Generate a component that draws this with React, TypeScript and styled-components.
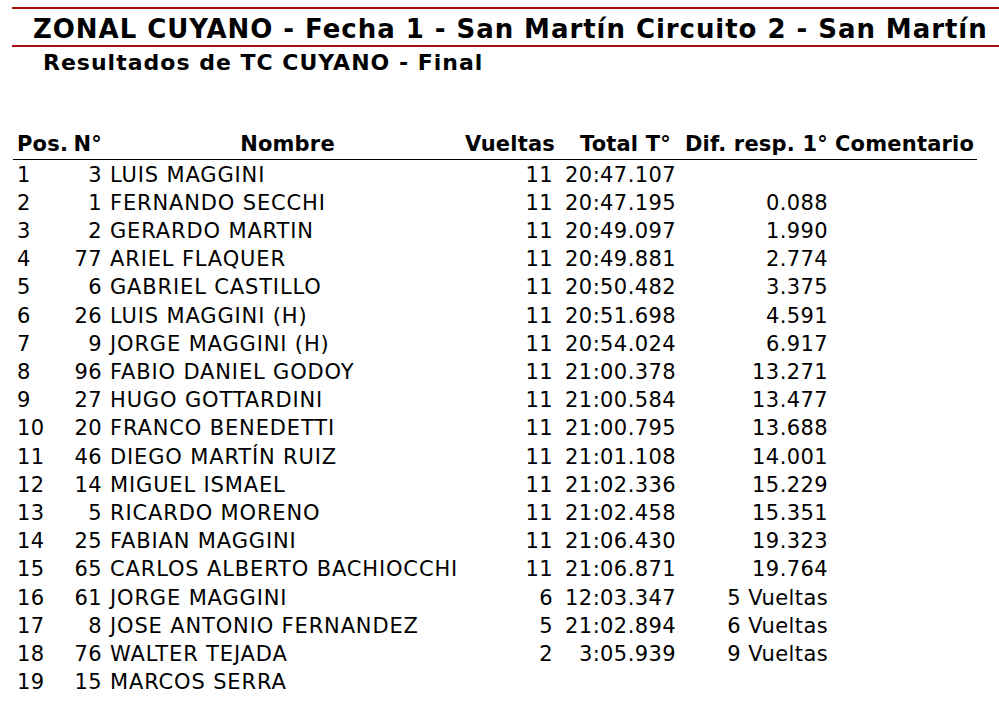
import styled, { createGlobalStyle } from 'styled-components'

const GlobalStyle = createGlobalStyle`
  body {
    margin: 0;
    background: #fff;
    color: #000;
    font-family: 'DejaVu Sans', Verdana, sans-serif;
  }
`

type Row = {
  pos: number
  num: number
  name: string
  laps: number | ''
  total: string
  diff: string
  comment?: string
}

const rows: Row[] = [
  { pos: 1, num: 3, name: 'LUIS MAGGINI', laps: 11, total: '20:47.107', diff: '' },
  { pos: 2, num: 1, name: 'FERNANDO SECCHI', laps: 11, total: '20:47.195', diff: '0.088' },
  { pos: 3, num: 2, name: 'GERARDO MARTIN', laps: 11, total: '20:49.097', diff: '1.990' },
  { pos: 4, num: 77, name: 'ARIEL FLAQUER', laps: 11, total: '20:49.881', diff: '2.774' },
  { pos: 5, num: 6, name: 'GABRIEL CASTILLO', laps: 11, total: '20:50.482', diff: '3.375' },
  { pos: 6, num: 26, name: 'LUIS MAGGINI (H)', laps: 11, total: '20:51.698', diff: '4.591' },
  { pos: 7, num: 9, name: 'JORGE MAGGINI (H)', laps: 11, total: '20:54.024', diff: '6.917' },
  { pos: 8, num: 96, name: 'FABIO DANIEL GODOY', laps: 11, total: '21:00.378', diff: '13.271' },
  { pos: 9, num: 27, name: 'HUGO GOTTARDINI', laps: 11, total: '21:00.584', diff: '13.477' },
  { pos: 10, num: 20, name: 'FRANCO BENEDETTI', laps: 11, total: '21:00.795', diff: '13.688' },
  { pos: 11, num: 46, name: 'DIEGO MARTÍN RUIZ', laps: 11, total: '21:01.108', diff: '14.001' },
  { pos: 12, num: 14, name: 'MIGUEL ISMAEL', laps: 11, total: '21:02.336', diff: '15.229' },
  { pos: 13, num: 5, name: 'RICARDO MORENO', laps: 11, total: '21:02.458', diff: '15.351' },
  { pos: 14, num: 25, name: 'FABIAN MAGGINI', laps: 11, total: '21:06.430', diff: '19.323' },
  { pos: 15, num: 65, name: 'CARLOS ALBERTO BACHIOCCHI', laps: 11, total: '21:06.871', diff: '19.764' },
  { pos: 16, num: 61, name: 'JORGE MAGGINI', laps: 6, total: '12:03.347', diff: '5 Vueltas' },
  { pos: 17, num: 8, name: 'JOSE ANTONIO FERNANDEZ', laps: 5, total: '21:02.894', diff: '6 Vueltas' },
  { pos: 18, num: 76, name: 'WALTER TEJADA', laps: 2, total: '3:05.939', diff: '9 Vueltas' },
  { pos: 19, num: 15, name: 'MARCOS SERRA', laps: '', total: '', diff: '' },
]

type Col = {
  label: string
  width: number
  align: 'left' | 'right'
  pl: number
  pr: number
  headAlign?: 'left' | 'right' | 'center'
  headPr?: number
  spacing?: number
}

// column boxes measured off the page, x from 13 to 977
const cols: Col[] = [
  { label: 'Pos.', width: 57, align: 'left', pl: 4, pr: 0 },
  { label: 'N°', width: 34, align: 'right', pl: 0, pr: 2 },
  { label: 'Nombre', width: 361, align: 'left', pl: 6, pr: 0, headAlign: 'center', spacing: 0.85 },
  { label: 'Vueltas', width: 91, align: 'right', pl: 0, pr: 3 },
  { label: 'Total T°', width: 123, align: 'right', pl: 0, pr: 3, headPr: 8 },
  { label: 'Dif. resp. 1°', width: 151, align: 'right', pl: 0, pr: 2 },
  { label: 'Comentario', width: 147, align: 'left', pl: 5, pr: 0 },
]

const Page = styled.div`
  padding-top: 7px;
`

const TitleBar = styled.h1`
  margin: 0 0 0 12px;
  border-top: 2px solid #a80f0f;
  border-bottom: 2px solid #a80f0f;
  padding: 5px 0 1px 21px;
  font-size: 26px;
  line-height: 30px;
  letter-spacing: 0.95px;
  font-weight: bold;
  white-space: nowrap;
`

const SubTitle = styled.h2`
  margin: 3px 0 0 43px;
  font-size: 22px;
  line-height: 26px;
  letter-spacing: 1px;
  font-weight: bold;
`

const Table = styled.table`
  margin: 53px 0 0 13px;
  width: 964px;
  border-collapse: collapse;
  table-layout: fixed;
  font-size: 21px;
  letter-spacing: 0.4px;
`

const HeadCell = styled.th<{ $align: string; $w: number; $pl: number; $pr: number }>`
  box-sizing: border-box;
  width: ${(p) => p.$w}px;
  text-align: ${(p) => p.$align};
  padding: 1px ${(p) => p.$pr}px 0 ${(p) => p.$pl}px;
  height: 30px;
  font-weight: bold;
  letter-spacing: 0.2px;
  border-bottom: 1px solid #000;
  white-space: nowrap;
  vertical-align: middle;
`

const Cell = styled.td<{ $align: string; $pl: number; $pr: number; $ls?: number }>`
  text-align: ${(p) => p.$align};
  padding: 3px ${(p) => p.$pr}px 0 ${(p) => p.$pl}px;
  height: 25.2px;
  line-height: 25.2px;
  white-space: nowrap;
  ${(p) => (p.$ls !== undefined ? `letter-spacing: ${p.$ls}px;` : '')}
`

const values = (r: Row) => [r.pos, r.num, r.name, r.laps, r.total, r.diff, r.comment ?? '']

export default function App() {
  return (
    <Page>
      <GlobalStyle />
      <TitleBar>ZONAL CUYANO - Fecha 1 - San Martín Circuito 2 - San Martín</TitleBar>
      <SubTitle>Resultados de TC CUYANO - Final</SubTitle>
      <Table>
        <thead>
          <tr>
            {cols.map((c) => (
              <HeadCell
                key={c.label}
                $w={c.width}
                $align={c.headAlign ?? c.align}
                $pl={c.pl}
                $pr={c.headPr ?? c.pr}
              >
                {c.label}
              </HeadCell>
            ))}
          </tr>
        </thead>
        <tbody>
          {rows.map((r) => (
            <tr key={r.pos}>
              {values(r).map((v, i) => (
                <Cell
                  key={i}
                  $align={cols[i].align}
                  $pl={cols[i].pl}
                  $pr={cols[i].pr}
                  $ls={cols[i].spacing}
                >
                  {v}
                </Cell>
              ))}
            </tr>
          ))}
        </tbody>
      </Table>
    </Page>
  )
}
